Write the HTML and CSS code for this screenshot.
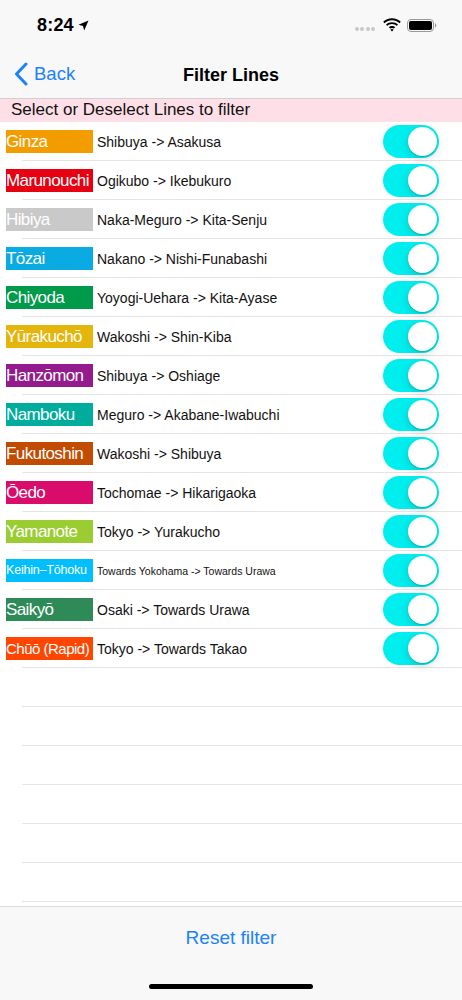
FILE: index.html
```html
<!DOCTYPE html>
<html lang="en">
<head>
    <meta charset="UTF-8">
    <meta name="viewport" content="width=device-width, initial-scale=1.0">
    <title>Filter Lines</title>
    <link rel="stylesheet" href="styles.css">
</head>
<body>
    <div class="screen">
        <div class="status-bar">
            <div class="status-time">
                8:24
                <svg class="loc-icon" width="11" height="11" viewBox="0 0 11 11">
                    <path d="M10.5 0.5 L0.5 4.8 L5 5.9 L6.2 10.5 Z" fill="#000"/>
                </svg>
            </div>
            <div class="status-icons">
                <div class="signal-dots">
                    <span></span><span></span><span></span><span></span>
                </div>
                <svg width="18" height="14" viewBox="0 0 18 14">
                    <path d="M9 2.2c2.9 0 5.5 1.1 7.5 3l1.3-1.4C15.5 1.6 12.4 0.3 9 0.3S2.5 1.6 0.2 3.8l1.3 1.4c2-1.9 4.6-3 7.5-3z" fill="#000"/>
                    <path d="M9 6.1c1.8 0 3.4 0.7 4.7 1.8l1.3-1.4C13.4 5 11.3 4.2 9 4.2S4.6 5 3 6.5l1.3 1.4C5.6 6.8 7.2 6.1 9 6.1z" fill="#000"/>
                    <path d="M9 9.9c0.8 0 1.4 0.3 1.9 0.7l1.3-1.4C11.4 8.5 10.3 8 9 8S6.6 8.5 5.8 9.2l1.3 1.4C7.6 10.2 8.2 9.9 9 9.9z M9 13.4l1.6-1.7c-0.4-0.4-1-0.6-1.6-0.6s-1.2 0.2-1.6 0.6z" fill="#000"/>
                </svg>
                <svg width="30" height="13" viewBox="0 0 30 13">
                    <rect x="0.5" y="0.5" width="26" height="12" rx="3.5" fill="none" stroke="#999" stroke-width="1"/>
                    <rect x="2" y="2" width="23" height="9" rx="2" fill="#000"/>
                    <path d="M28 4.3v4.4c0.8-0.3 1.3-1.2 1.3-2.2s-0.5-1.9-1.3-2.2z" fill="#999"/>
                </svg>
            </div>
        </div>

        <div class="nav-bar">
            <a class="nav-back">
                <svg width="14" height="24" viewBox="0 0 14 24">
                    <path d="M12 2 L2.5 12 L12 22" fill="none" stroke="#1a82fb" stroke-width="3" stroke-linecap="round" stroke-linejoin="round"/>
                </svg>
                Back
            </a>
            <div class="nav-title">Filter Lines</div>
        </div>

        <div class="section-header">Select or Deselect Lines to filter</div>

        <ul class="line-list">
            <li class="line-row">
                <span class="line-label ginza">Ginza</span>
                <span class="line-route">Shibuya -&gt; Asakusa</span>
                <span class="switch on"></span>
            </li>
            <li class="line-row">
                <span class="line-label marunouchi">Marunouchi</span>
                <span class="line-route">Ogikubo -&gt; Ikebukuro</span>
                <span class="switch on"></span>
            </li>
            <li class="line-row">
                <span class="line-label hibiya">Hibiya</span>
                <span class="line-route">Naka-Meguro -&gt; Kita-Senju</span>
                <span class="switch on"></span>
            </li>
            <li class="line-row">
                <span class="line-label tozai">Tōzai</span>
                <span class="line-route">Nakano -&gt; Nishi-Funabashi</span>
                <span class="switch on"></span>
            </li>
            <li class="line-row">
                <span class="line-label chiyoda">Chiyoda</span>
                <span class="line-route">Yoyogi-Uehara -&gt; Kita-Ayase</span>
                <span class="switch on"></span>
            </li>
            <li class="line-row">
                <span class="line-label yurakucho">Yūrakuchō</span>
                <span class="line-route">Wakoshi -&gt; Shin-Kiba</span>
                <span class="switch on"></span>
            </li>
            <li class="line-row">
                <span class="line-label hanzomon">Hanzōmon</span>
                <span class="line-route">Shibuya -&gt; Oshiage</span>
                <span class="switch on"></span>
            </li>
            <li class="line-row">
                <span class="line-label namboku">Namboku</span>
                <span class="line-route">Meguro -&gt; Akabane-Iwabuchi</span>
                <span class="switch on"></span>
            </li>
            <li class="line-row">
                <span class="line-label fukutoshin">Fukutoshin</span>
                <span class="line-route">Wakoshi -&gt; Shibuya</span>
                <span class="switch on"></span>
            </li>
            <li class="line-row">
                <span class="line-label oedo">Ōedo</span>
                <span class="line-route">Tochomae -&gt; Hikarigaoka</span>
                <span class="switch on"></span>
            </li>
            <li class="line-row">
                <span class="line-label yamanote">Yamanote</span>
                <span class="line-route">Tokyo -&gt; Yurakucho</span>
                <span class="switch on"></span>
            </li>
            <li class="line-row">
                <span class="line-label keihin small">Keihin–Tōhoku</span>
                <span class="line-route small">Towards Yokohama -&gt; Towards Urawa</span>
                <span class="switch on"></span>
            </li>
            <li class="line-row">
                <span class="line-label saikyo">Saikyō</span>
                <span class="line-route">Osaki -&gt; Towards Urawa</span>
                <span class="switch on"></span>
            </li>
            <li class="line-row">
                <span class="line-label chuo mid">Chūō (Rapid)</span>
                <span class="line-route">Tokyo -&gt; Towards Takao</span>
                <span class="switch on"></span>
            </li>
            <li class="line-row empty"></li>
            <li class="line-row empty"></li>
            <li class="line-row empty"></li>
            <li class="line-row empty"></li>
            <li class="line-row empty"></li>
            <li class="line-row empty"></li>
            <li class="line-row empty"></li>
        </ul>

        <div class="toolbar">
            <a class="reset-btn">Reset filter</a>
            <div class="home-indicator"></div>
        </div>
    </div>
</body>
</html>
```

FILE: styles.css
```css
body {
    margin: 0;
    font-family: 'Liberation Sans', Arial, sans-serif;
    background: #fff;
    color: #000;
}
.screen {
    width: 462px;
    height: 1000px;
    display: flex;
    flex-direction: column;
    overflow: hidden;
}
.status-bar {
    height: 48px;
    flex: none;
    background: #f8f8f8;
    display: flex;
    align-items: center;
    justify-content: space-between;
    padding: 2px 25px 0 37px;
    box-sizing: border-box;
}
.status-time {
    font-size: 18px;
    font-weight: 600;
    display: flex;
    align-items: center;
    gap: 4px;
    letter-spacing: 0.2px;
}
.status-icons {
    display: flex;
    align-items: center;
    gap: 6px;
}
.signal-dots {
    display: flex;
    gap: 1.5px;
    margin-top: 8px;
    margin-right: 2px;
}
.signal-dots span {
    width: 4px;
    height: 4px;
    border-radius: 50%;
    background: #c8c8c8;
}
.nav-bar {
    height: 51px;
    flex: none;
    background: #f8f8f8;
    border-bottom: 1px solid #cfcfcf;
    display: flex;
    align-items: center;
    position: relative;
    box-sizing: border-box;
    padding-top: 2px;
}
.nav-back {
    display: flex;
    align-items: center;
    gap: 6px;
    color: #1a82fb;
    font-size: 18.5px;
    padding-left: 14px;
    z-index: 1;
}
.nav-title {
    position: absolute;
    left: 0;
    right: 0;
    text-align: center;
    font-size: 18px;
    font-weight: 700;
    padding-top: 2px;
}
.section-header {
    height: 23px;
    flex: none;
    background: #ffdfe7;
    font-size: 17px;
    line-height: 22px;
    padding-left: 11px;
    color: #111;
}
.line-list {
    list-style: none;
    margin: 0;
    padding: 0;
    flex: 1;
    min-height: 0;
    overflow: hidden;
}
.line-row {
    height: 39px;
    display: flex;
    align-items: center;
    padding-left: 6px;
    padding-right: 23px;
    box-sizing: border-box;
    background: linear-gradient(#e4e4e4, #e4e4e4) no-repeat 22px 100% / calc(100% - 22px) 1px;
}
.line-label {
    width: 87px;
    height: 23px;
    flex: none;
    color: #fff;
    font-size: 17px;
    letter-spacing: -0.6px;
    line-height: 23px;
    white-space: nowrap;
    overflow: hidden;
}
.line-label.mid {
    font-size: 15px;
    letter-spacing: -0.5px;
}
.line-label.small {
    font-size: 12.5px;
    letter-spacing: -0.2px;
}
.line-route {
    flex: 1;
    padding-left: 4px;
    font-size: 14px;
    color: #111;
    white-space: nowrap;
}
.line-route.small {
    font-size: 10.5px;
}
.switch {
    width: 56px;
    height: 33px;
    margin-top: -1px;
    border-radius: 17px;
    background: #e9e9ea;
    position: relative;
    flex: none;
}
.switch.on {
    background: #00eeee;
}
.switch::after {
    content: '';
    position: absolute;
    top: 2px;
    left: 2px;
    width: 29px;
    height: 29px;
    border-radius: 50%;
    background: #fff;
    box-shadow: 0 3px 8px rgba(0,0,0,0.15), 0 1px 1px rgba(0,0,0,0.16);
}
.switch.on::after {
    left: 25px;
}
.ginza { background: #f39c00; }
.marunouchi { background: #e60012; }
.hibiya { background: #c9c9c9; }
.tozai { background: #0aaae3; }
.chiyoda { background: #009a4b; }
.yurakucho { background: #e4b50b; }
.hanzomon { background: #931b8d; }
.namboku { background: #00ad9c; }
.fukutoshin { background: #c14b00; }
.oedo { background: #d90b6b; }
.yamanote { background: #9acd32; }
.keihin { background: #00bfff; }
.saikyo { background: #2e8b57; }
.chuo { background: #ff4500; }
.toolbar {
    height: 94px;
    flex: none;
    background: #f8f8f8;
    border-top: 1px solid #dcdcdc;
    box-sizing: border-box;
    display: flex;
    flex-direction: column;
    align-items: center;
}
.reset-btn {
    color: #1a82fb;
    font-size: 19px;
    margin-top: 20px;
}
.home-indicator {
    width: 164px;
    height: 5px;
    border-radius: 3px;
    background: #000;
    margin-top: 35px;
}
```
